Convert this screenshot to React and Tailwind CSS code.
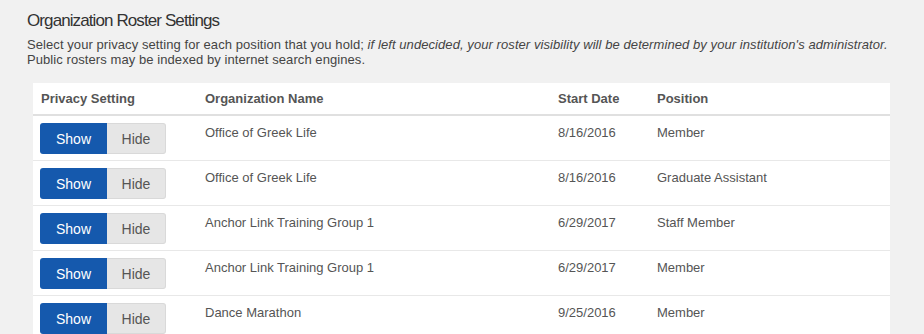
import React from "react";

const rows = [
  { org: "Office of Greek Life", date: "8/16/2016", pos: "Member" },
  { org: "Office of Greek Life", date: "8/16/2016", pos: "Graduate Assistant" },
  { org: "Anchor Link Training Group 1", date: "6/29/2017", pos: "Staff Member" },
  { org: "Anchor Link Training Group 1", date: "6/29/2017", pos: "Member" },
  { org: "Dance Marathon", date: "9/25/2016", pos: "Member" },
];

const cols = "grid grid-cols-[164px_353px_99px_241px]";

export default function App() {
  return (
    <div
      className="min-h-screen bg-[#f1f1f1] pl-[27px] pr-[34px] pt-[11px]"
      style={{ fontFamily: '"Liberation Sans", Arial, sans-serif' }}
    >
      <h1 className="text-[17px] leading-[20px] tracking-[-0.9px] text-[#333]">
        Organization Roster Settings
      </h1>
      <p className="mt-[6px] text-[13px] leading-[15px] tracking-[0.075px] text-[#444]">
        Select your privacy setting for each position that you hold;{" "}
        <em>if left undecided, your roster visibility will be determined by your institution's administrator.</em>
        <br />
        Public rosters may be indexed by internet search engines.
      </p>
      <div className="mt-[16px] ml-[6px] w-[857px] bg-white text-[13px] text-[#555]">
        <div className={`${cols} border-b-2 border-[#e0e0e0] font-bold leading-[19px]`}>
          <div className="px-[8px] py-[6px]">Privacy Setting</div>
          <div className="px-[8px] py-[6px]">Organization Name</div>
          <div className="px-[8px] py-[6px]">Start Date</div>
          <div className="px-[8px] py-[6px]">Position</div>
        </div>
        {rows.map((r, i) => (
          <div key={i} className={`${cols} h-[45px] border-b border-[#e8e8e8] leading-[18px]`}>
            <div className="pl-[7px] pt-[7px]">
              <div className="flex h-[31px] w-[126px] text-[14px]">
                <button className="w-[67px] rounded-l-[3px] bg-[#1559ad] text-white">Show</button>
                <button className="w-[59px] rounded-r-[3px] border border-l-0 border-[#d9d9d9] bg-[#e6e6e6] text-[#555]">
                  Hide
                </button>
              </div>
            </div>
            <div className="px-[8px] pt-[8px]">{r.org}</div>
            <div className="px-[8px] pt-[8px]">{r.date}</div>
            <div className="px-[8px] pt-[8px]">{r.pos}</div>
          </div>
        ))}
      </div>
    </div>
  );
}
